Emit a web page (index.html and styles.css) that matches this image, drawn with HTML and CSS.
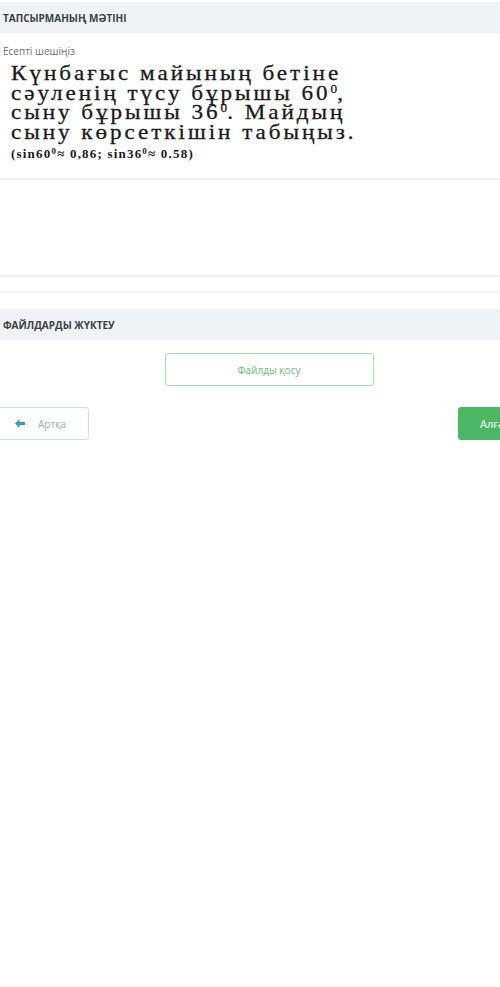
FILE: index.html
```html
<!DOCTYPE html>
<html lang="kk">
  <head>
    <meta charset="UTF-8" />
    <meta name="viewport" content="width=device-width, initial-scale=1.0" />
    <title>Тапсырма</title>
    <link rel="stylesheet" href="styles.css">
  </head>
  <body>
    <div class="section-head">Тапсырманың мәтіні</div>

    <div class="task">
      <div class="task-label">Есепті шешіңіз</div>
      <div class="task-text">
        <p class="big">Күнбағыс майының бетіне</p>
        <p class="big">сәуленің түсу бұрышы 60<sup>0</sup>,</p>
        <p class="big">сыну бұрышы 36<sup>0</sup>. Майдың</p>
        <p class="big">сыну көрсеткішін табыңыз.</p>
        <p class="small">(sin60<sup>0</sup>≈ 0,86; sin36<sup>0</sup>≈ 0.58)</p>
      </div>
    </div>

    <div class="answer"></div>
    <div class="spacer"></div>

    <div class="section-head files-head">Файлдарды жүктеу</div>

    <div class="upload">
      <button class="add-file">Файлды қосу</button>
    </div>

    <div class="nav">
      <button class="back">
        <svg class="arrow" width="10" height="9" viewBox="0 0 10 9">
          <path d="M0 4.5 L4.5 0 L4.5 3 L10 3 L10 6 L4.5 6 L4.5 9 Z" fill="#3b9ea6" />
        </svg>
        Артқа
      </button>
      <button class="next">Алға</button>
    </div>
  </body>
</html>
```

FILE: styles.css
```css
body {
  font-family: "Open Sans", sans-serif;
  margin: 0;
  padding: 0;
  background-color: #fff;
  color: #333;
}

.section-head {
  background-color: #f0f3f5;
  height: 31px;
  line-height: 33px;
  padding-left: 3px;
  font-size: 10px;
  font-weight: bold;
  text-transform: uppercase;
  color: #3a3f44;
  margin-top: 2px;
}

.files-head {
  margin-top: 16px;
}

.task {
  padding: 12px 3px 0;
  height: 133px;
  border-bottom: 2px solid #f2f2f2;
}

.task-label {
  font-size: 10px;
  color: #6b6f73;
  line-height: 12px;
}

.task-text {
  padding-left: 8px;
  margin-top: 7px;
  font-family: "Liberation Serif", serif;
  color: #1a1a1a;
}

.task-text p {
  margin: 0;
}

.big {
  font-size: 21px;
  line-height: 19.5px;
  letter-spacing: 2.7px;
  transform: scaleX(1.1);
  transform-origin: left;
  -webkit-text-stroke: 0.3px #1a1a1a;
}

.big sup {
  font-size: 12px;
  line-height: 0;
  letter-spacing: 0;
  vertical-align: 7px;
}

.small {
  font-size: 13px;
  font-weight: bold;
  margin-top: 5px !important;
  line-height: 14px;
  letter-spacing: 1.2px;
}

.small sup {
  font-size: 9px;
  line-height: 0;
  vertical-align: 4px;
}

.answer {
  height: 95px;
  border-bottom: 2px solid #f2f2f2;
}

.spacer {
  height: 14px;
  border-bottom: 2px solid #f4f4f4;
}

.upload {
  display: flex;
  justify-content: center;
  padding: 13px 0 0 38px;
}

.add-file {
  width: 209px;
  height: 33px;
  background-color: #fff;
  border: 1px solid #a9d9b2;
  border-radius: 3px;
  font-family: "Open Sans", sans-serif;
  font-size: 10px;
  color: #6abb7e;
}

.nav {
  display: flex;
  justify-content: space-between;
  margin-top: 21px;
}

.back {
  width: 95px;
  height: 33px;
  margin-left: -6px;
  background-color: #fff;
  border: 1px solid #cfdfe6;
  border-radius: 3px;
  font-family: "Open Sans", sans-serif;
  font-size: 10px;
  color: #8db4c0;
  display: flex;
  align-items: center;
  padding-left: 20px;
}

.back .arrow {
  margin-right: 13px;
}

.next {
  width: 60px;
  height: 33px;
  margin-right: -18px;
  background-color: #4cb866;
  border: none;
  border-radius: 3px;
  font-family: "Open Sans", sans-serif;
  font-size: 11px;
  color: #fff;
  text-align: left;
  padding-left: 22px;
}
```
